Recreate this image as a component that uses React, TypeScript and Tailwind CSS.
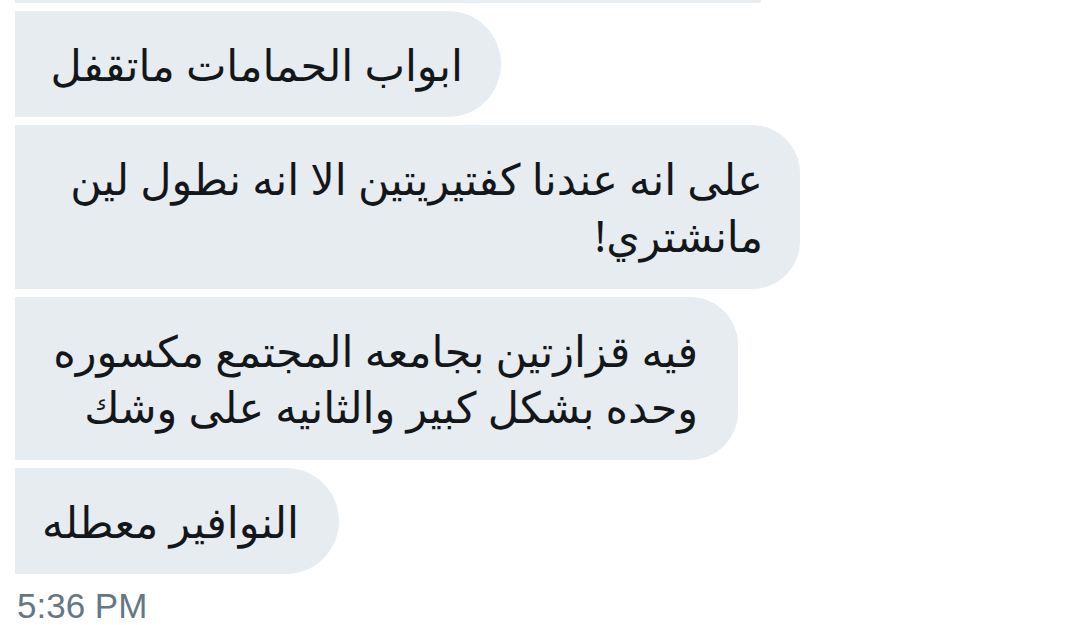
import React from "react";

const arabic = "font-['Noto_Sans','DejaVu_Sans',sans-serif]";

export default function App() {
  return (
    <div className="w-[1069px] h-[625px] overflow-hidden bg-white pl-[15px] flex flex-col">
      <div className="h-[3px] w-[746px] bg-[#e6ecf0] rounded-br-[6px] shrink-0" />
      <div className="mt-[8px] flex flex-col gap-[8px]">
        <div
          dir="rtl"
          className={`${arabic} h-[106px] w-[486px] bg-[#e6ecf0] rounded-r-[53px] flex items-center pr-[38px] pl-[20px] text-[43px] leading-[57px] text-[#14171a]`}
        >
          <span className="whitespace-nowrap">ابواب الحمامات ماتقفل</span>
        </div>
        <div
          dir="rtl"
          className={`${arabic} h-[164px] w-[785px] bg-[#e6ecf0] rounded-r-[48px] flex items-center pr-[37px] pl-[20px] text-[43px] leading-[57px] text-[#14171a]`}
        >
          <span className="whitespace-nowrap">
            على انه عندنا كفتيريتين الا انه نطول لين
            <br />
            مانشتري!
          </span>
        </div>
        <div
          dir="rtl"
          className={`${arabic} h-[163px] w-[723px] bg-[#e6ecf0] rounded-r-[48px] flex items-center pr-[40px] pl-[20px] text-[43px] leading-[56px] text-[#14171a]`}
        >
          <span className="whitespace-nowrap">
            فيه قزازتين بجامعه المجتمع مكسوره
            <br />
            وحده بشكل كبير والثانيه على وشك
          </span>
        </div>
        <div
          dir="rtl"
          className={`${arabic} h-[106px] w-[324px] bg-[#e6ecf0] rounded-r-[53px] flex items-center pr-[40px] pl-[20px] text-[43px] leading-[57px] text-[#14171a]`}
        >
          <span className="whitespace-nowrap">النوافير معطله</span>
        </div>
      </div>
      <div className="mt-[12px] pl-[2px] font-['Liberation_Sans',Arial,sans-serif] text-[35px] leading-[40px] text-[#657786]">
        5:36 PM
      </div>
    </div>
  );
}
